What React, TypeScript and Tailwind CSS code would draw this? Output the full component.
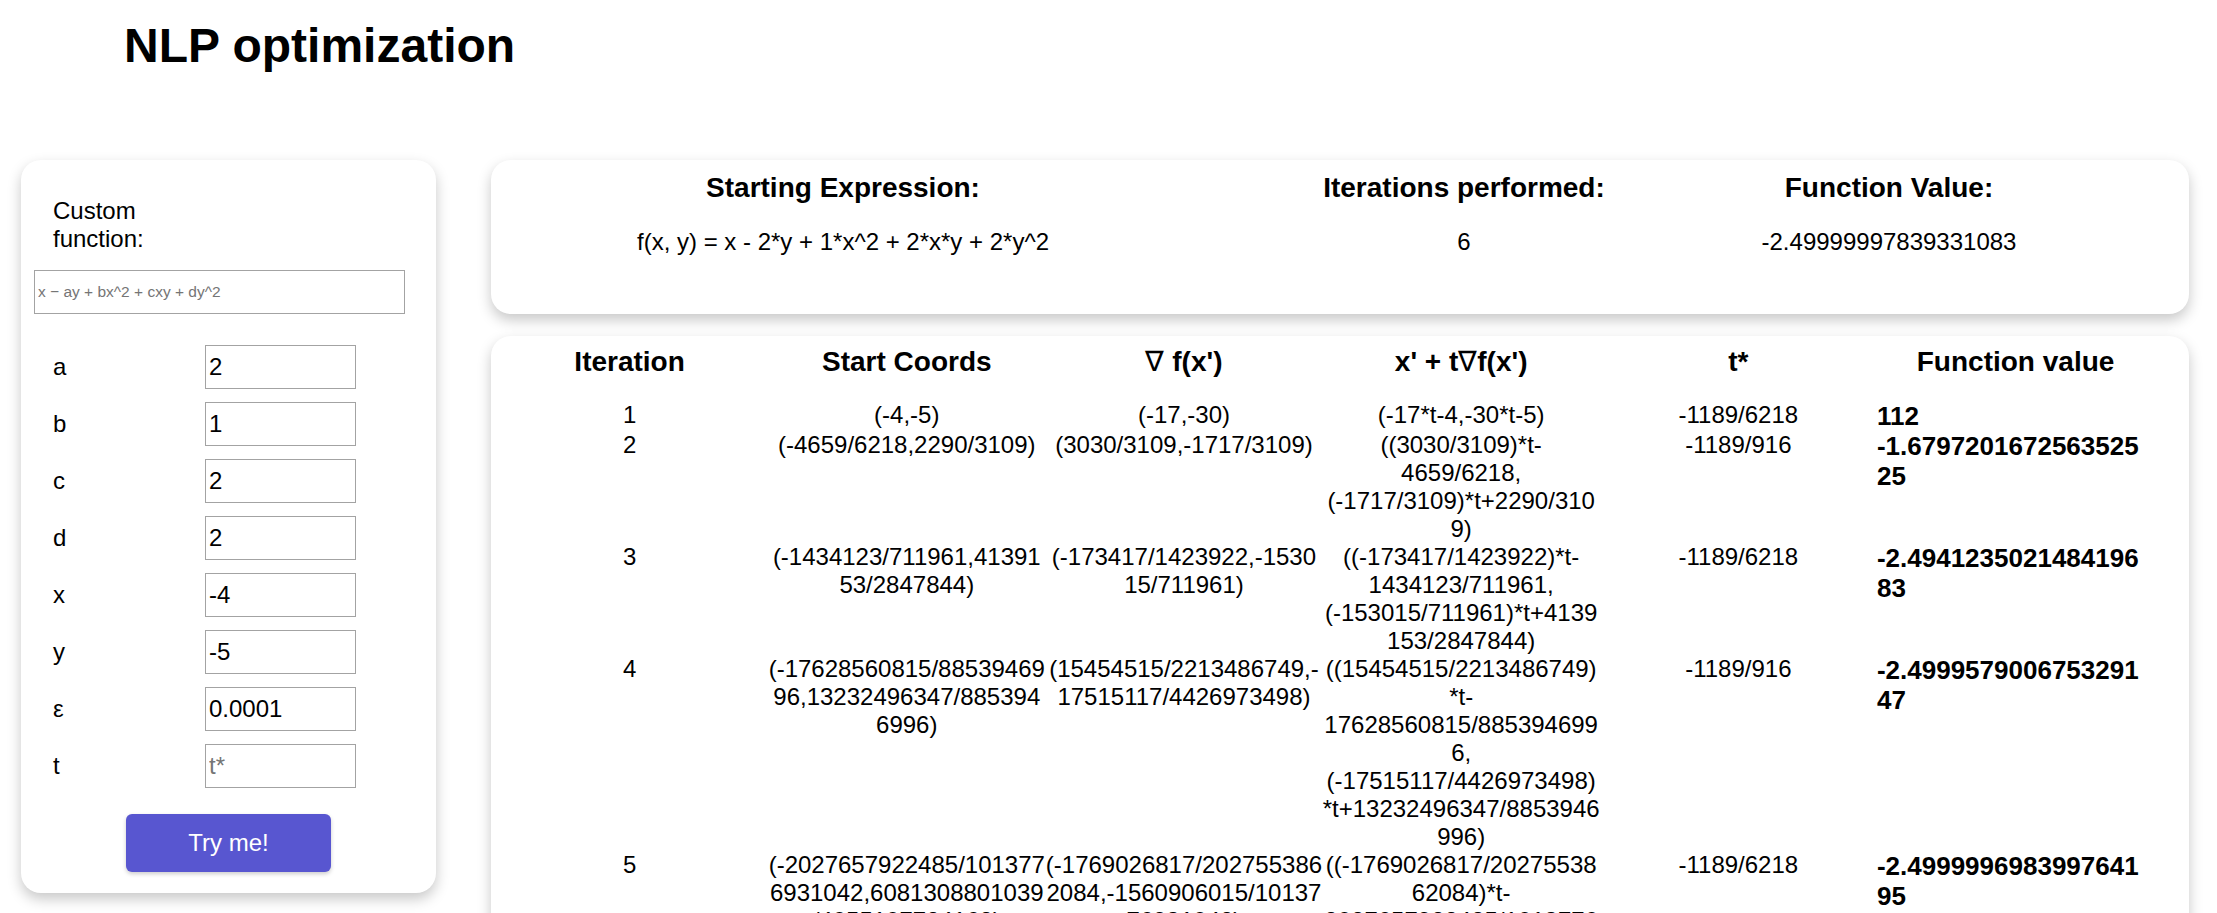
import { useState } from "react";
import type { ReactNode } from "react";

type Row = {
  iteration: string;
  start: string;
  gradient: string;
  step: string;
  t: string;
  value: string;
};

// \u200B marks the spot where the original cell text wraps after "*t-"
const rows: Row[] = [
  {
    iteration: "1",
    start: "(-4,-5)",
    gradient: "(-17,-30)",
    step: "(-17*t-4,-30*t-5)",
    t: "-1189/6218",
    value: "112",
  },
  {
    iteration: "2",
    start: "(-4659/6218,2290/3109)",
    gradient: "(3030/3109,-1717/3109)",
    step: "((3030/3109)*t-\u200B4659/6218, (-1717/3109)*t+2290/3109)",
    t: "-1189/916",
    value: "-1.679720167256352525",
  },
  {
    iteration: "3",
    start: "(-1434123/711961,4139153/2847844)",
    gradient: "(-173417/1423922,-153015/711961)",
    step: "((-173417/1423922)*t-\u200B1434123/711961, (-153015/711961)*t+4139153/2847844)",
    t: "-1189/6218",
    value: "-2.494123502148419683",
  },
  {
    iteration: "4",
    start: "(-17628560815/8853946996,13232496347/8853946996)",
    gradient: "(15454515/2213486749,-17515117/4426973498)",
    step: "((15454515/2213486749)*t-\u200B17628560815/8853946996, (-17515117/4426973498)*t+13232496347/8853946996)",
    t: "-1189/916",
    value: "-2.499957900675329147",
  },
  {
    iteration: "5",
    start: "(-2027657922485/1013776931042,6081308801039/4055107724168)",
    gradient: "(-1769026817/2027553862084,-1560906015/1013776931042)",
    step: "((-1769026817/2027553862084)*t-\u200B2027657922485/1013776931042, (-1560906015/1013776931042)*t+6081308801039/4055107724168)",
    t: "-1189/6218",
    value: "-2.499999698399764195",
  },
];

const params: { label: string; value: string; placeholder?: string }[] = [
  { label: "a", value: "2" },
  { label: "b", value: "1" },
  { label: "c", value: "2" },
  { label: "d", value: "2" },
  { label: "x", value: "-4" },
  { label: "y", value: "-5" },
  { label: "ε", value: "0.0001" },
  { label: "t", value: "", placeholder: "t*" },
];

const Nabla = () => <span className="font-normal">∇</span>;

const headers: { key: string; label: ReactNode }[] = [
  { key: "iteration", label: "Iteration" },
  { key: "start", label: "Start Coords" },
  { key: "gradient", label: <><Nabla /> f(x')</> },
  { key: "step", label: <>x' + t<Nabla />f(x')</> },
  { key: "t", label: "t*" },
  { key: "value", label: "Function value" },
];

function Sidebar() {
  const [expression, setExpression] = useState("");

  return (
    <aside className="flex w-[415px] shrink-0 flex-col rounded-[20px] bg-white pt-[37px] pb-[21px] shadow-[0_6px_14px_rgba(0,0,0,0.22)]">
      <label
        htmlFor="custom-function"
        className="ml-[32px] w-[152px] text-[24px] leading-[28px]"
      >
        Custom function:
      </label>
      <input
        id="custom-function"
        value={expression}
        onChange={(e) => setExpression(e.target.value)}
        placeholder="x − ay + bx^2 + cxy + dy^2"
        className="mt-[17px] ml-[13px] h-[44px] w-[371px] border border-[#a3a3a3] bg-white px-[3px] text-[15.5px] text-black outline-none placeholder:text-[#757575]"
      />

      <div className="mt-[31px] ml-[32px] grid grid-cols-[152px_151px] gap-y-[13px]">
        {params.map((param) => (
          <div key={param.label} className="contents">
            <span className="flex h-[44px] items-center text-[24px]">{param.label}</span>
            <input
              defaultValue={param.value}
              placeholder={param.placeholder}
              className="h-[44px] w-[151px] border border-[#a3a3a3] bg-white px-[3px] text-[24px] text-black outline-none placeholder:text-[#757575]"
            />
          </div>
        ))}
      </div>

      <button
        type="button"
        className="mx-auto mt-[26px] h-[58px] w-[205px] rounded-[6px] bg-[#5856d0] text-[24px] text-white shadow-[0_2px_4px_rgba(0,0,0,0.2)] hover:bg-[#4b49c4]"
      >
        Try me!
      </button>
    </aside>
  );
}

function Summary() {
  return (
    <section className="h-[154px] rounded-[20px] bg-white pt-[12px] shadow-[0_6px_14px_rgba(0,0,0,0.22)]">
      <div className="grid grid-cols-[704px_538px_312px] text-center">
        <h3 className="text-[28px] font-bold leading-[32px]">Starting Expression:</h3>
        <h3 className="text-[28px] font-bold leading-[32px]">Iterations performed:</h3>
        <h3 className="text-[28px] font-bold leading-[32px]">Function Value:</h3>
        <p className="mt-[24px] text-[24px] leading-[28px]">f(x, y) = x - 2*y + 1*x^2 + 2*x*y + 2*y^2</p>
        <p className="mt-[24px] text-[24px] leading-[28px]">6</p>
        <p className="mt-[24px] text-[24px] leading-[28px]">-2.49999997839331083</p>
      </div>
    </section>
  );
}

function IterationTable() {
  return (
    <section className="rounded-[20px] bg-white pt-[10px] pb-[24px] shadow-[0_6px_14px_rgba(0,0,0,0.22)]">
      <table className="w-[1663.2px] table-fixed border-separate border-spacing-0">
        <colgroup>
          {headers.map((h) => (
            <col key={h.key} className="w-[277.2px]" />
          ))}
        </colgroup>
        <thead>
          <tr>
            {headers.map((h) => (
              <th key={h.key} className="p-0 pb-[23px] text-center text-[28px] font-bold leading-[32px]">
                {h.label}
              </th>
            ))}
          </tr>
        </thead>
        <tbody>
          {rows.map((row) => (
            <tr key={row.iteration}>
              <td className="p-0 text-center align-top text-[24px] leading-[28px]">{row.iteration}</td>
              <td className="p-0 text-center align-top text-[24px] leading-[28px] break-words">{row.start}</td>
              <td className="p-0 text-center align-top text-[24px] leading-[28px] break-words">{row.gradient}</td>
              <td className="p-0 text-center align-top text-[24px] leading-[28px] break-words">{row.step}</td>
              <td className="p-0 text-center align-top text-[24px] leading-[28px]">{row.t}</td>
              <td className="p-0 pr-[2px] text-left align-top text-[26px] font-bold leading-[30px] break-words">
                {row.value}
              </td>
            </tr>
          ))}
        </tbody>
      </table>
    </section>
  );
}

export default function App() {
  return (
    <div className="min-h-screen bg-white font-['Liberation_Sans',Arial,sans-serif] text-black">
      <h1 className="pt-[18px] pl-[124px] text-[48px] font-bold leading-[56px]">NLP optimization</h1>

      <div className="mt-[86px] flex items-start gap-[55px] pl-[21px] pb-[40px]">
        <Sidebar />
        <main className="flex w-[1698px] flex-col gap-[22px]">
          <Summary />
          <IterationTable />
        </main>
      </div>
    </div>
  );
}
